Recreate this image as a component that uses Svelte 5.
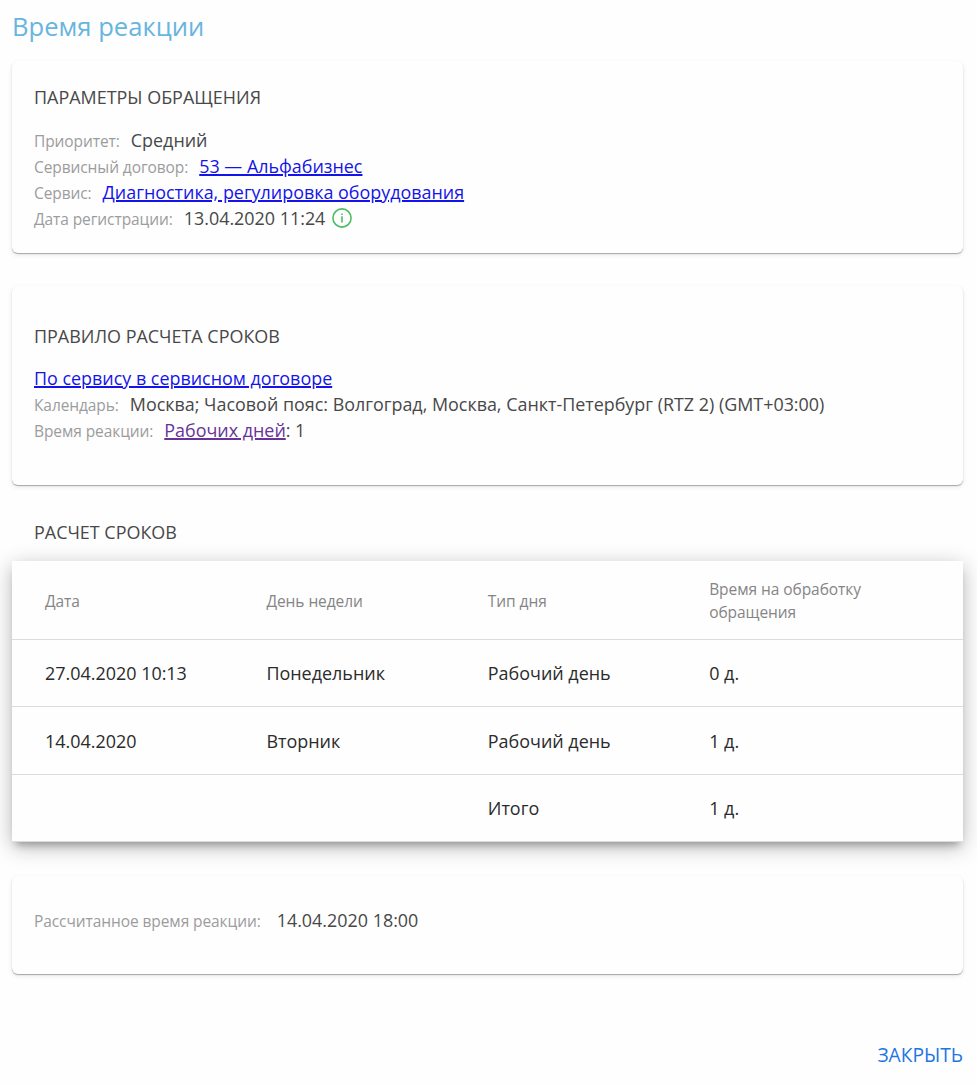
<script>
  const rows = [
    ['27.04.2020 10:13', 'Понедельник', 'Рабочий день', '0 д.'],
    ['14.04.2020', 'Вторник', 'Рабочий день', '1 д.'],
    ['', '', 'Итого', '1 д.'],
  ];
</script>

<main>
  <h1>Время реакции</h1>

  <section class="card params">
    <h2>ПАРАМЕТРЫ ОБРАЩЕНИЯ</h2>
    <div class="field"><span class="label">Приоритет:</span><span>Средний</span></div>
    <div class="field"><span class="label">Сервисный договор:</span><a href="#contract">53 — Альфабизнес</a></div>
    <div class="field"><span class="label">Сервис:</span><a href="#service">Диагностика, регулировка оборудования</a></div>
    <div class="field">
      <span class="label">Дата регистрации:</span><span>13.04.2020 11:24</span>
      <svg class="info" viewBox="0 0 20 20" aria-hidden="true">
        <circle cx="10" cy="10" r="9.1" />
        <path d="M10 8.2V14.6M10 5.4V7" />
      </svg>
    </div>
  </section>

  <section class="card rule">
    <h2>ПРАВИЛО РАСЧЕТА СРОКОВ</h2>
    <div class="field"><a href="#rule">По сервису в сервисном договоре</a></div>
    <div class="field"><span class="label">Календарь:</span><span>Москва; Часовой пояс: Волгоград, Москва, Санкт-Петербург (RTZ 2) (GMT+03:00)</span></div>
    <div class="field"><span class="label">Время реакции:</span><span><a class="seen" href="#days">Рабочих дней</a>: 1</span></div>
  </section>

  <h2 class="caption">РАСЧЕТ СРОКОВ</h2>
  <table>
    <thead>
      <tr><th>Дата</th><th>День недели</th><th>Тип дня</th><th>Время на обработку обращения</th></tr>
    </thead>
    <tbody>
      {#each rows as row}
        <tr>{#each row as cell}<td>{cell}</td>{/each}</tr>
      {/each}
    </tbody>
  </table>

  <section class="card total">
    <div class="field"><span class="label">Рассчитанное время реакции:</span><span>14.04.2020 18:00</span></div>
  </section>

  <footer><button>ЗАКРЫТЬ</button></footer>
</main>

<style>
  :global(body) {
    background: #fefefe;
  }
  main {
    box-sizing: border-box;
    height: 1084px;
    padding: 9px 14px 0 12px;
    display: flex;
    flex-direction: column;
    font-family: 'Open Sans', sans-serif;
    font-size: 17.92px;
    color: #484848;
    overflow: hidden;
  }
  h1 {
    margin: 0 0 16px;
    font-size: 25.6px;
    line-height: 36px;
    font-weight: 400;
    color: #68b5df;
  }
  h2 {
    margin: 0;
    font-size: 17.95px;
    line-height: 26px;
    font-weight: 400;
  }
  .card {
    box-sizing: border-box;
    padding: 0 22px;
    border-radius: 6px;
    background: #fefefe;
    box-shadow: 0 1px 1px rgba(0, 0, 0, 0.3), 0 2px 5px rgba(0, 0, 0, 0.09);
  }
  .params {
    height: 191.5px;
    padding-top: 23px;
    margin-bottom: 33.5px;
  }
  .params h2 {
    margin-bottom: 17px;
  }
  .rule {
    height: 199px;
    padding-top: 37px;
    margin-bottom: 34px;
  }
  .rule h2 {
    margin-bottom: 16px;
  }
  .field {
    display: flex;
    align-items: baseline;
    height: 26px;
    line-height: 26px;
    white-space: nowrap;
  }
  .rule .field {
    height: 26.2px;
  }
  .label {
    margin-right: 11px;
    font-size: 15.5px;
    letter-spacing: -0.085px;
    color: #9c9c9c;
  }
  a {
    color: #1414e8;
    text-decoration: underline;
    text-decoration-thickness: 1.5px;
  }
  a.seen {
    color: #663399;
  }
  .info {
    width: 20px;
    height: 20px;
    margin-left: 7px;
    align-self: center;
    fill: none;
    stroke: #4dbd60;
    stroke-width: 1.6;
  }
  .params .field:last-child {
    height: 25px;
  }
  .caption {
    padding-left: 22px;
    margin-bottom: 16px;
  }
  table {
    width: 951px;
    table-layout: fixed;
    border-collapse: separate;
    border-spacing: 0;
    background: #fefefe;
    box-shadow: 0 7px 7px -4px rgba(0, 0, 0, 0.25), 0 5px 20px rgba(0, 0, 0, 0.28);
  }
  th,
  td {
    box-sizing: border-box;
    padding: 0 33px;
    border-bottom: 1px solid #dcdcdc;
    text-align: left;
    font-weight: 400;
  }
  th:nth-child(-n + 3),
  td:nth-child(-n + 3) {
    width: 221.4px;
    padding-right: 0;
  }
  th:last-child {
    padding-right: 60px;
  }
  th {
    height: 78.5px;
    padding-top: 3px;
    font-size: 15.5px;
    letter-spacing: -0.06px;
    line-height: 23px;
    color: #858585;
  }
  th:last-child {
    padding-top: 2px;
  }
  td {
    height: 67.5px;
    padding-top: 1px;
    font-size: 17.95px;
    color: #2b2b2b;
  }
  .total {
    height: 98.5px;
    margin-top: 33.5px;
    padding-top: 31.5px;
  }
  .total .label {
    margin-right: 16px;
  }
  footer {
    display: flex;
    justify-content: flex-end;
    margin-top: 67px;
  }
  button {
    padding: 0;
    border: 0;
    background: none;
    font: 400 19.2px/27px 'Open Sans', sans-serif;
    color: #1d75e2;
  }
</style>
